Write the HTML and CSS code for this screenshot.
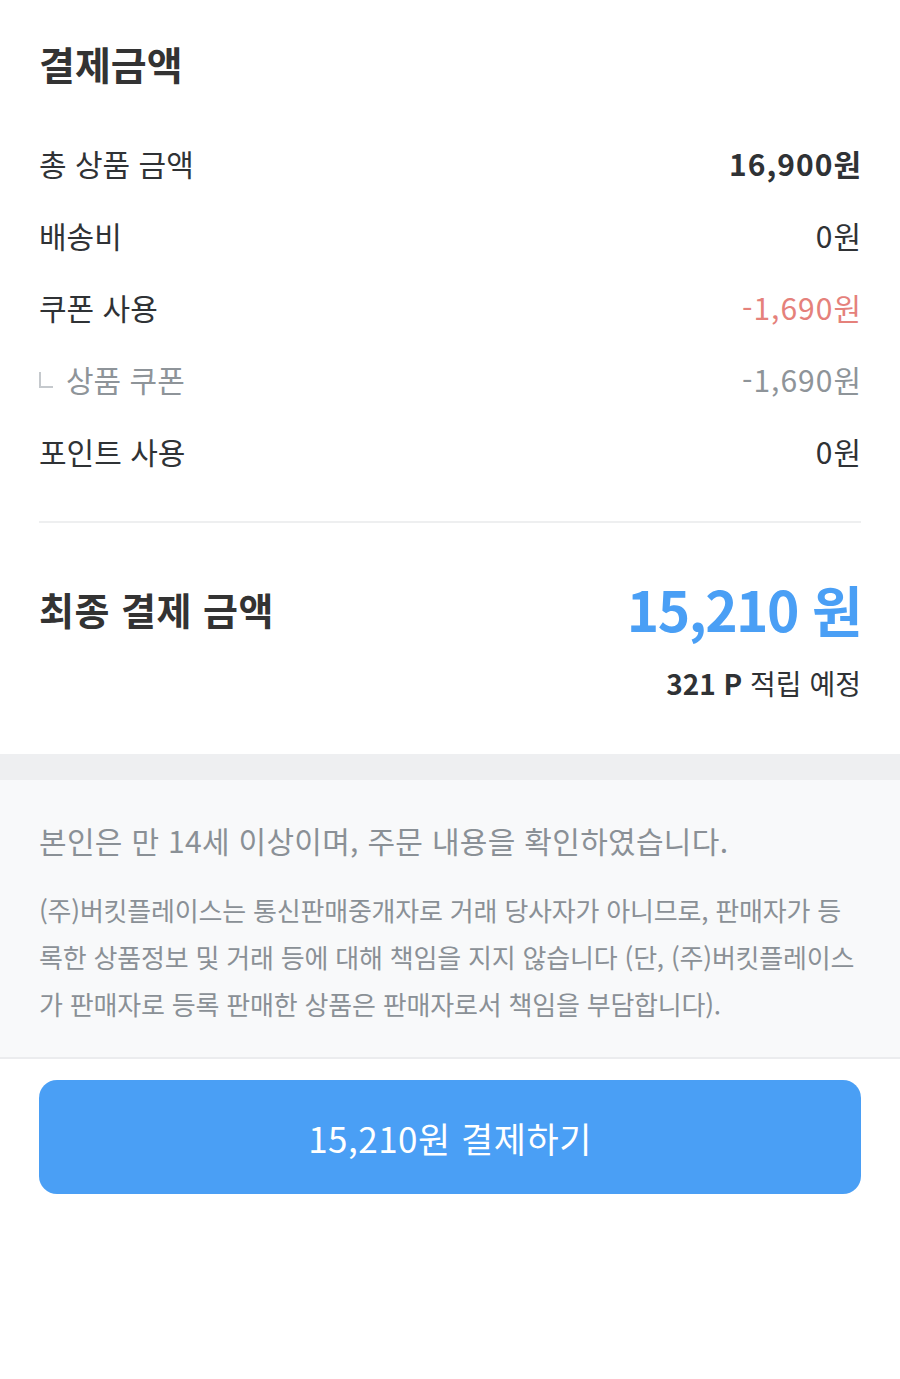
FILE: index.html
```html
<!DOCTYPE html>
<html lang="ko">
<head>
  <meta charset="UTF-8">
  <meta name="viewport" content="width=device-width, initial-scale=1.0">
  <title>결제금액</title>
  <link rel="stylesheet" href="styles.css">
</head>
<body>
  <div class="summary">
    <h2 class="title">결제금액</h2>
    <ul class="rows">
      <li class="row">
        <span>총 상품 금액</span>
        <span class="price bold">16,900원</span>
      </li>
      <li class="row">
        <span>배송비</span>
        <span class="price">0원</span>
      </li>
      <li class="row">
        <span>쿠폰 사용</span>
        <span class="price minus">-1,690원</span>
      </li>
      <li class="row sub">
        <span><i class="corner"></i>상품 쿠폰</span>
        <span class="price">-1,690원</span>
      </li>
      <li class="row">
        <span>포인트 사용</span>
        <span class="price">0원</span>
      </li>
    </ul>
    <hr class="divider">
    <div class="total">
      <span class="total-label">최종 결제 금액</span>
      <span class="total-price">15,210 원</span>
    </div>
    <div class="point"><b>321 P</b> 적립 예정</div>
  </div>

  <div class="band"></div>

  <div class="notice">
    <p class="agree">본인은 만 14세 이상이며, 주문 내용을 확인하였습니다.</p>
    <p class="legal">(주)버킷플레이스는 통신판매중개자로 거래 당사자가 아니므로, 판매자가 등록한 상품정보 및 거래 등에 대해 책임을 지지 않습니다 (단, (주)버킷플레이스가 판매자로 등록 판매한 상품은 판매자로서 책임을 부담합니다).</p>
  </div>

  <div class="pay">
    <button class="pay-btn">15,210원 결제하기</button>
  </div>
</body>
</html>
```

FILE: styles.css
```css
body {
  margin: 0;
  background-color: #fff;
  font-family: "Noto Sans CJK KR", "Noto Sans", sans-serif;
  color: #2f3235;
}

.summary {
  padding: 38px 39px 51px;
}

.title {
  margin: 0;
  font-size: 39px;
  line-height: 50px;
  font-weight: 700;
  color: #333;
}

.rows {
  list-style: none;
  margin: 39px 0 0;
  padding: 0;
}

.row {
  display: flex;
  justify-content: space-between;
  align-items: center;
  height: 72px;
  font-size: 30px;
}

.price {
  letter-spacing: 1px;
  margin-right: -1px;
}

.bold {
  font-weight: 700;
}

.minus {
  color: #e5817b;
}

.sub {
  color: #8e9499;
}

.corner {
  display: inline-block;
  width: 12px;
  height: 14px;
  border-left: 2px solid #c5c9cd;
  border-bottom: 2px solid #c5c9cd;
  margin: 0 13px 0 0;
  vertical-align: 4px;
}

.divider {
  margin: 34px 0 0;
  border: none;
  height: 2px;
  background-color: #eeeff0;
}

.total {
  display: flex;
  justify-content: space-between;
  align-items: center;
  height: 70px;
  margin-top: 50px;
}

.total-label {
  font-size: 38px;
  font-weight: 700;
  letter-spacing: 0.5px;
  color: #333;
}

.total-price {
  font-size: 55px;
  font-weight: 700;
  letter-spacing: -1.5px;
  color: #4a9ff5;
}

.point {
  margin-top: 20px;
  line-height: 40px;
  text-align: right;
  font-size: 28px;
}

.band {
  height: 26px;
  background-color: #eeeff1;
}

.notice {
  background-color: #f8f9fa;
  padding: 40px 39px 30px;
  border-bottom: 2px solid #ebecee;
  color: #8a9096;
}

.agree {
  margin: 0;
  font-size: 30px;
  line-height: 40px;
  letter-spacing: 0.3px;
}

.legal {
  margin: 26px 0 0;
  font-size: 26px;
  line-height: 47px;
  letter-spacing: -0.2px;
}

.pay {
  padding: 21px 39px;
}

.pay-btn {
  display: block;
  width: 100%;
  height: 114px;
  border: none;
  border-radius: 18px;
  background-color: #4a9ff5;
  color: #fff;
  font-family: inherit;
  font-size: 35px;
  letter-spacing: 0.5px;
  cursor: pointer;
}
```
